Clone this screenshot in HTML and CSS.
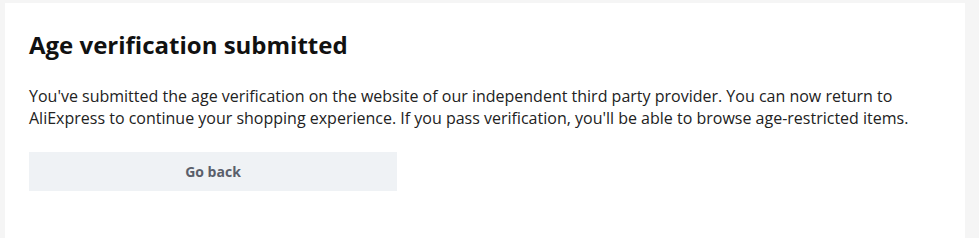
FILE: index.html
```html
<!DOCTYPE html>
<html lang="en">
<head>
  <meta charset="UTF-8">
  <meta name="viewport" content="width=device-width, initial-scale=1.0">
  <title>Age verification submitted</title>
  <link rel="stylesheet" href="styles.css">
</head>
<body>
  <div class="card">
    <h1 class="title">Age verification submitted</h1>
    <p class="message">You've submitted the age verification on the website of our independent third party provider. You can now return to AliExpress to continue your shopping experience. If you pass verification, you'll be able to browse age-restricted items.</p>
    <button class="back-button">Go back</button>
  </div>
</body>
</html>
```

FILE: styles.css
```css
body {
  margin: 0;
  padding: 3px 14px 0 5px;
  background-color: #f5f5f5;
  font-family: "Open Sans", sans-serif;
  height: 100vh;
  box-sizing: border-box;
  overflow: hidden;
}

/* White panel holding the message */
.card {
  background-color: #fff;
  height: 100%;
  padding: 26px 24px 0 24px;
  box-sizing: border-box;
}

.title {
  margin: 0;
  font-size: 24px;
  font-weight: 700;
  line-height: 32px;
  color: #111;
}

.message {
  margin: 24px 0 0 0;
  font-size: 16px;
  line-height: 22px;
  color: #222;
  max-width: 880px;
}

.back-button {
  display: block;
  margin-top: 23px;
  width: 368px;
  height: 39px;
  border: none;
  background-color: #eff2f5;
  color: #5a5f6b;
  font-family: "Open Sans", sans-serif;
  font-size: 14px;
  font-weight: 700;
  cursor: pointer;
}
```
